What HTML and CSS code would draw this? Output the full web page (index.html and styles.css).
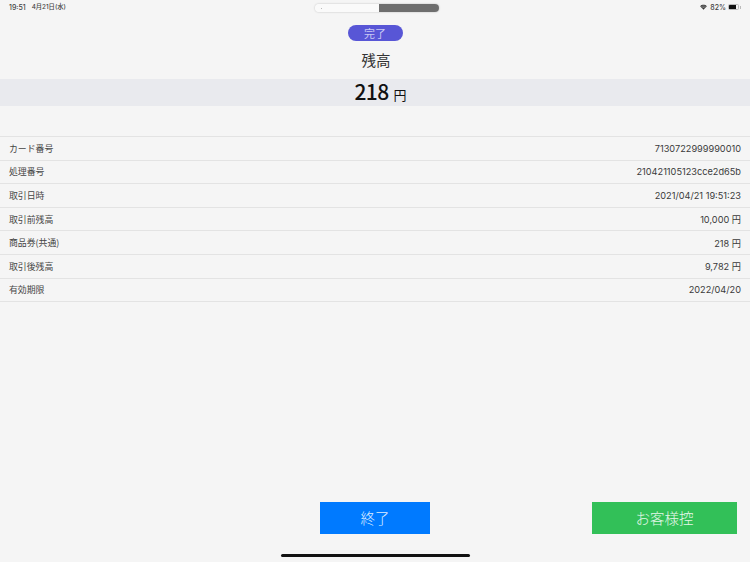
FILE: index.html
```html
<!DOCTYPE html>
<html lang="ja">
<head>
  <meta charset="UTF-8" />
  <title>残高</title>
  <link rel="stylesheet" href="styles.css">
</head>
<body>
  <div class="screen">
    <div class="status-bar">
      <div class="status-left">
        <span>19:51</span>
        <span class="status-date">4月21日(水)</span>
      </div>
      <div class="status-right">
        <svg class="wifi" width="7" height="6" viewBox="0 0 18 14">
          <path d="M9 14 L0.5 5 C5 0 13 0 17.5 5 Z" fill="#333" />
          <path d="M3.5 6.2 C6.5 3.8 11.5 3.8 14.5 6.2" stroke="#f5f5f5" stroke-width="1.2" fill="none" />
          <path d="M6 9 C7.8 7.8 10.2 7.8 12 9" stroke="#f5f5f5" stroke-width="1.2" fill="none" />
        </svg>
        <span>82%</span>
        <div class="battery"><div class="battery-fill"></div></div>
        <div class="battery-tip"></div>
      </div>
    </div>

    <div class="slider">
      <div class="slider-light"><i class="slider-dot"></i></div>
      <div class="slider-dark"></div>
    </div>

    <div class="badge">完了</div>
    <h1 class="title">残高</h1>

    <div class="amount-band">
      <span class="amount">218</span>
      <span class="amount-unit">円</span>
    </div>

    <div class="rows">
      <div class="row"><span>カード番号</span><span>7130722999990010</span></div>
      <div class="row"><span>処理番号</span><span>210421105123cce2d65b</span></div>
      <div class="row"><span>取引日時</span><span>2021/04/21 19:51:23</span></div>
      <div class="row"><span>取引前残高</span><span>10,000 円</span></div>
      <div class="row"><span>商品券(共通)</span><span>218 円</span></div>
      <div class="row"><span>取引後残高</span><span>9,782 円</span></div>
      <div class="row"><span>有効期限</span><span>2022/04/20</span></div>
    </div>

    <div class="actions">
      <button class="btn btn-end">終了</button>
      <button class="btn btn-copy">お客様控</button>
    </div>

    <div class="home-bar"></div>
  </div>
</body>
</html>
```

FILE: styles.css
```css
* {
  box-sizing: border-box;
  margin: 0;
  padding: 0;
}

html, body {
  width: 750px;
  height: 562px;
  overflow: hidden;
}

body {
  font-family: "Noto Sans CJK JP", "Noto Sans", sans-serif;
  background: #f5f5f5;
  color: #333;
}

.screen {
  position: relative;
  height: 562px;
  display: flex;
  flex-direction: column;
  align-items: center;
}

.status-bar {
  position: absolute;
  top: 0;
  left: 0;
  width: 100%;
  height: 14px;
  padding: 0 9px;
  display: flex;
  justify-content: space-between;
  align-items: center;
  font-family: Inter, "Noto Sans CJK JP", sans-serif;
  font-size: 7px;
  font-weight: 500;
  color: #444;
}

.status-left {
  display: flex;
  gap: 6px;
}

.status-date {
  font-size: 6.3px;
  line-height: 9px;
}

.status-right {
  display: flex;
  align-items: center;
  gap: 2px;
}

.wifi {
  margin-right: 1px;
}

.battery {
  width: 11px;
  height: 6px;
  border-radius: 1.5px;
  border: 1px solid #bbb;
  overflow: hidden;
}

.battery-fill {
  width: 82%;
  height: 100%;
  background: #111;
}

.battery-tip {
  width: 1px;
  height: 3px;
  margin-left: -1px;
  background: #bbb;
}

.slider {
  position: absolute;
  top: 4px;
  left: 315px;
  width: 124px;
  height: 8px;
  display: flex;
  border-radius: 4px;
  overflow: hidden;
  box-shadow: 0 0 2px rgba(0,0,0,0.25);
}

.slider-light {
  width: 63.5px;
  display: flex;
  align-items: center;
  padding-left: 6px;
  background: #fafafa;
}

.slider-dot {
  width: 1px;
  height: 1px;
  background: #bbb;
}

.slider-dark {
  flex: 1;
  background: #6e6e6e;
}

.badge {
  margin-top: 25px;
  width: 55px;
  height: 16px;
  line-height: 16px;
  border-radius: 8px;
  background: #5856d6;
  color: #c9c8f4;
  font-size: 11px;
  text-align: center;
}

.title {
  margin-top: 9px;
  padding-left: 2px;
  height: 20px;
  line-height: 20px;
  font-size: 14.5px;
  font-weight: 400;
  color: #333;
}

.amount-band {
  margin-top: 9px;
  padding-left: 11px;
  width: 100%;
  height: 27px;
  display: flex;
  justify-content: center;
  align-items: baseline;
  gap: 5px;
  line-height: 25px;
  background: #e9eaee;
  color: #111;
}

.amount {
  font-size: 21px;
  font-weight: 500;
  letter-spacing: -0.6px;
}

.amount-unit {
  font-size: 13px;
}

.rows {
  margin-top: 30px;
  width: 100%;
  border-top: 1px solid #e3e3e3;
}

.row {
  height: 23.6px;
  padding: 0 9px;
  display: flex;
  justify-content: space-between;
  align-items: center;
  border-bottom: 1px solid #e3e3e3;
  font-size: 8.9px;
  color: #444;
}

.row span:last-child {
  font-family: Inter, "Noto Sans CJK JP", sans-serif;
  font-size: 9.2px;
  color: #3a3a3a;
}

.actions {
  position: absolute;
  top: 502px;
  left: 320px;
  width: 417px;
  display: flex;
  justify-content: space-between;
}

.btn {
  height: 32px;
  padding-bottom: 2px;
  border: none;
  font-family: inherit;
  font-size: 14.5px;
  font-weight: 300;
  color: #dcebff;
}

.btn-end {
  width: 110px;
  background: #007aff;
}

.btn-copy {
  width: 145px;
  background: #32c058;
  color: #e4f7e9;
}

.home-bar {
  position: absolute;
  top: 554px;
  left: 281px;
  width: 189px;
  height: 3px;
  border-radius: 2px;
  background: #111;
}
```
